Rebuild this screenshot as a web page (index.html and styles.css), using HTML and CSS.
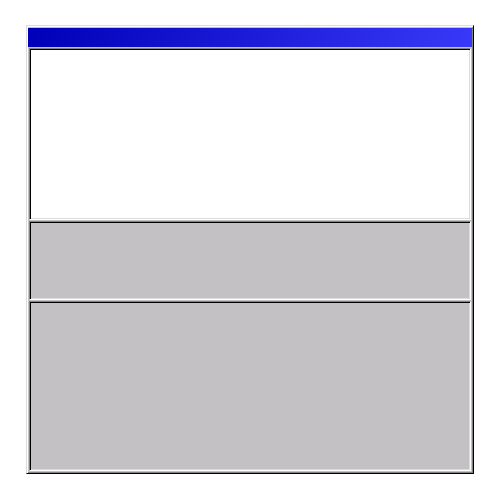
FILE: index.html
```html
<!DOCTYPE html>
<html>
<head>
<meta charset="utf-8">
<link rel="stylesheet" href="styles.css">
</head>
<body>
<div class="window">
  <div class="titlebar"></div>
  <div class="panel panel-white"></div>
  <div class="panel panel-mid"></div>
  <div class="panel panel-bottom"></div>
</div>
</body>
</html>
```
FILE: styles.css
```css
html, body {
  margin: 0;
  padding: 0;
  background: #ffffff;
  width: 500px;
  height: 500px;
}
body {
  padding: 25px 26px;
  box-sizing: border-box;
}
.window {
  width: 448px;
  height: 449px;
  box-sizing: border-box;
  background: #c3c1c4;
  border-top: 1px solid #dcdadd;
  border-left: 1px solid #dcdadd;
  border-right: 1px solid #000000;
  border-bottom: 1px solid #000000;
  box-shadow: inset 1px 1px 0 #ffffff, inset -1px -1px 0 #848284;
  padding: 2px 1px;
  display: flex;
  flex-direction: column;
  gap: 1px;
}
.titlebar {
  height: 19px;
  flex: none;
  background: linear-gradient(to right, #0000b8, #3838f8);
}
.panel {
  box-sizing: border-box;
  margin: 0 1px;
  border-top: 1px solid #848284;
  border-left: 1px solid #848284;
  border-right: 1px solid #ffffff;
  border-bottom: 1px solid #ffffff;
  box-shadow: inset 1px 1px 0 #000000, inset -1px -1px 0 #dcdadd;
  flex: none;
}
.panel-white {
  height: 172px;
  background: #ffffff;
}
.panel-mid {
  height: 79px;
  background: #c3c1c4;
}
.panel-bottom {
  flex: 1;
  background: #c3c1c4;
}
```
